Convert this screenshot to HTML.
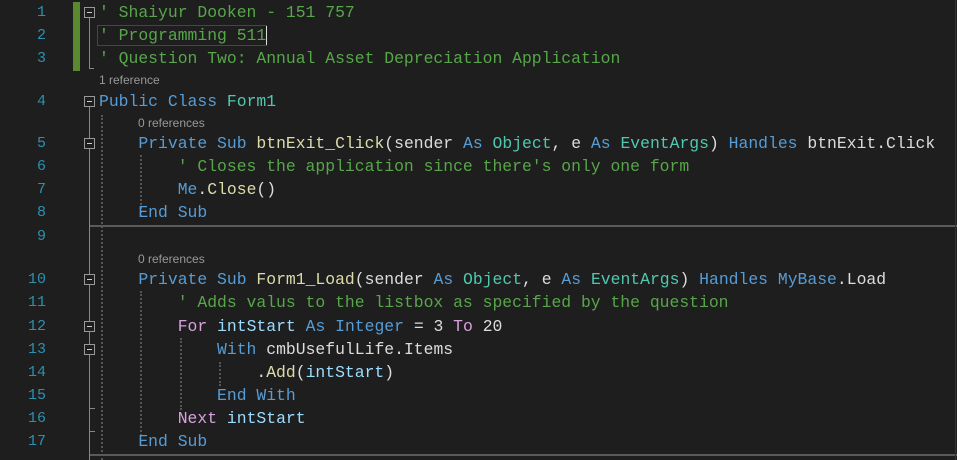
<!DOCTYPE html>
<html><head><meta charset="utf-8"><style>
body{margin:0;width:957px;height:460px;background:#1e1e1e;overflow:hidden;position:relative;font-family:"Liberation Mono",monospace;}
.l{position:absolute;left:99px;font-size:16.4px;white-space:pre;color:#dcdcdc;line-height:23px;height:23px}
.n{position:absolute;width:46px;text-align:right;left:0;font-size:15px;color:#2b91af;line-height:23px;font-family:"Liberation Mono",monospace}
.r{position:absolute;font-family:"Liberation Sans",sans-serif;font-size:12px;color:#999;line-height:16px}
.c{color:#57a64a}.k{color:#569cd6}.t{color:#4ec9b0}.p{color:#d8a0df}.m{color:#dcdcaa}.v{color:#9cdcfe}
.box{position:absolute;left:84px;width:9px;height:9px;border:1px solid #999;box-sizing:content-box;background:#1e1e1e;z-index:2}
.box:after{content:"";position:absolute;left:2px;top:4px;width:5px;height:1px;background:#ccc}
.vl{position:absolute;width:1px;background:#888}
.dg{position:absolute;width:0;border-left:2px dotted #555}
.sep{position:absolute;left:90px;right:0;height:2px;background:#5a5a5a}
</style></head><body>
<div style="position:absolute;left:73px;top:2px;width:7px;height:69px;background:#5a8a2e"></div>
<div style="position:absolute;left:97px;top:25px;width:170px;height:21px;border:1px solid #464646;box-sizing:border-box"></div>
<div style="position:absolute;left:266px;top:26px;width:1px;height:19px;background:#ddd"></div>

<div class="box" style="top:7px"></div>
<div class="vl" style="left:89px;top:18px;height:51px"></div>
<div class="vl" style="left:89px;top:68px;width:5px;height:1px"></div>
<div class="box" style="top:96px"></div>
<div class="vl" style="left:89px;top:107px;height:353px"></div>
<div class="box" style="top:138px"></div>
<div class="box" style="top:274px"></div>
<div class="box" style="top:321px"></div>
<div class="box" style="top:344px"></div>
<div class="vl" style="left:89px;top:408px;width:6px;height:1px"></div>
<div class="vl" style="left:89px;top:431px;width:6px;height:1px"></div>

<div class="dg" style="left:101px;top:115px;height:345px"></div>
<div class="dg" style="left:140px;top:155px;height:62px"></div>
<div class="dg" style="left:140px;top:291px;height:145px"></div>
<div class="dg" style="left:180px;top:338px;height:72px"></div>
<div class="dg" style="left:219px;top:362px;height:24px"></div>

<div class="sep" style="top:225px"></div>
<div class="sep" style="top:454px"></div>
<div style="position:absolute;right:1px;top:0;width:1px;height:460px;background:#333"></div>

<div class="n" style="top:1px">1</div><div class="l c" style="top:1px">' Shaiyur Dooken - 151 757</div>
<div class="n" style="top:24px">2</div><div class="l c" style="top:24px">' Programming 511</div>
<div class="n" style="top:47px">3</div><div class="l c" style="top:47px">' Question Two: Annual Asset Depreciation Application</div>
<div class="r" style="left:99px;top:72px">1 reference</div>
<div class="n" style="top:90px">4</div><div class="l" style="top:90px"><span class="k">Public Class</span> <span class="t">Form1</span></div>
<div class="r" style="left:138px;top:115px">0 references</div>
<div class="n" style="top:132px">5</div><div class="l" style="top:132px">    <span class="k">Private Sub</span> <span class="m">btnExit_Click</span>(sender <span class="k">As</span> <span class="t">Object</span>, e <span class="k">As</span> <span class="t">EventArgs</span>) <span class="k">Handles</span> btnExit.Click</div>
<div class="n" style="top:155px">6</div><div class="l c" style="top:155px">        ' Closes the application since there's only one form</div>
<div class="n" style="top:178px">7</div><div class="l" style="top:178px">        <span class="k">Me</span>.<span class="m">Close</span>()</div>
<div class="n" style="top:201px">8</div><div class="l k" style="top:201px">    End Sub</div>
<div class="n" style="top:225px">9</div>
<div class="r" style="left:138px;top:251px">0 references</div>
<div class="n" style="top:268px">10</div><div class="l" style="top:268px">    <span class="k">Private Sub</span> <span class="m">Form1_Load</span>(sender <span class="k">As</span> <span class="t">Object</span>, e <span class="k">As</span> <span class="t">EventArgs</span>) <span class="k">Handles</span> <span class="k">MyBase</span>.Load</div>
<div class="n" style="top:291px">11</div><div class="l c" style="top:291px">        ' Adds valus to the listbox as specified by the question</div>
<div class="n" style="top:315px">12</div><div class="l" style="top:315px">        <span class="p">For</span> <span class="v">intStart</span> <span class="k">As Integer</span> = 3 <span class="p">To</span> 20</div>
<div class="n" style="top:338px">13</div><div class="l" style="top:338px">            <span class="k">With</span> cmbUsefulLife.Items</div>
<div class="n" style="top:361px">14</div><div class="l" style="top:361px">                .<span class="m">Add</span>(<span class="v">intStart</span>)</div>
<div class="n" style="top:384px">15</div><div class="l k" style="top:384px">            End With</div>
<div class="n" style="top:407px">16</div><div class="l" style="top:407px">        <span class="p">Next</span> <span class="v">intStart</span></div>
<div class="n" style="top:430px">17</div><div class="l k" style="top:430px">    End Sub</div>
</body></html>
